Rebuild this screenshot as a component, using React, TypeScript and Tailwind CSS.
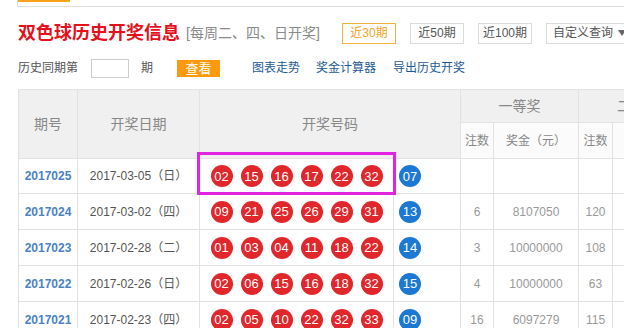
import React from "react";

interface Draw {
  issue: string;
  date: string;
  red: string[];
  blue: string;
  n1: string;
  p1: string;
  n2: string;
  p2: string;
}

const draws: Draw[] = [
  { issue: "2017025", date: "2017-03-05（日）", red: ["02", "15", "16", "17", "22", "32"], blue: "07", n1: "", p1: "", n2: "", p2: "" },
  { issue: "2017024", date: "2017-03-02（四）", red: ["09", "21", "25", "26", "29", "31"], blue: "13", n1: "6", p1: "8107050", n2: "120", p2: "159459" },
  { issue: "2017023", date: "2017-02-28（二）", red: ["01", "03", "04", "11", "18", "22"], blue: "14", n1: "3", p1: "10000000", n2: "108", p2: "190745" },
  { issue: "2017022", date: "2017-02-26（日）", red: ["02", "06", "15", "16", "18", "32"], blue: "15", n1: "4", p1: "10000000", n2: "63", p2: "316728" },
  { issue: "2017021", date: "2017-02-23（四）", red: ["02", "05", "10", "22", "32", "33"], blue: "09", n1: "16", p1: "6097279", n2: "115", p2: "201584" },
];

function Ball({ n, blue }: { n: string; blue?: boolean }) {
  return (
    <span
      className={`inline-flex h-[22px] w-[22px] items-center justify-center rounded-full text-[13px] leading-none text-white ${
        blue ? "bg-[#1b78d3]" : "bg-[#e0272b]"
      }`}
    >
      {n}
    </span>
  );
}

export default function App() {
  return (
    <div className="h-[328px] w-[624px] overflow-hidden bg-white font-['Liberation_Sans','Noto_Sans_CJK_SC',sans-serif]">
      {/* tab strip bottom edge */}
      <div className="ml-[17px] h-[7px] border-b border-l border-[#dddddd]">
        <div className="h-[2px] w-[52px] bg-[#f9a31b]" />
      </div>

      {/* title + range buttons */}
      <div className="mt-[15px] flex h-[22px] items-center">
        <div className="flex w-[342px] shrink-0 items-center pl-[18px]">
          <h1 className="text-[18px] font-bold leading-none text-[#e5101c]">双色球历史开奖信息</h1>
          <span className="ml-[6px] text-[14px] leading-none text-[#8a8a8a]">[每周二、四、日开奖]</span>
        </div>
        <div className="flex shrink-0 gap-[14px] text-[12px]">
          <button className="h-[21px] w-[54px] shrink-0 border border-[#f0b43c] text-[#f5a225]">近30期</button>
          <button className="h-[21px] w-[54px] shrink-0 border border-[#dcdcdc] text-[#555]">近50期</button>
          <button className="h-[21px] w-[54px] shrink-0 border border-[#dcdcdc] text-[#555]">近100期</button>
          <button className="flex h-[21px] w-[90px] shrink-0 items-center border border-[#dcdcdc] pl-[6px] text-[#555]">
            自定义查询
            <svg className="ml-[5px] shrink-0" width="8" height="6" viewBox="0 0 8 6">
              <path d="M0 0h8L4 6z" fill="#666" />
            </svg>
          </button>
        </div>
      </div>

      {/* history lookup + links */}
      <div className="mt-[14px] flex h-[20px] items-center pl-[18px] text-[12px] text-[#555]">
        <span>历史同期第</span>
        <input className="ml-[13px] h-[19px] w-[38px] border border-[#cccccc] outline-none" />
        <span className="ml-[12px]">期</span>
        <button className="ml-[24px] h-[17px] w-[43px] bg-[#fb9a0e] text-[13px] leading-none text-white">查看</button>
        <a className="ml-[32px] text-[#1d5a92]">图表走势</a>
        <a className="ml-[16px] text-[#1d5a92]">奖金计算器</a>
        <a className="ml-[17px] text-[#1d5a92]">导出历史开奖</a>
      </div>

      {/* results table */}
      <div className="relative ml-[18px] mt-[11px]">
        <table className="w-[679px] table-fixed border-collapse text-center">
          <colgroup>
            <col className="w-[59px]" />
            <col className="w-[122px]" />
            <col className="w-[194px]" />
            <col className="w-[67px]" />
            <col className="w-[33px]" />
            <col className="w-[85px]" />
            <col className="w-[34px]" />
            <col className="w-[85px]" />
          </colgroup>
          <thead className="text-[#888]">
            <tr className="h-[33px] bg-[#f0f0f0] text-[14px]">
              <th rowSpan={2} className="border border-[#e2e2e2] font-normal">期号</th>
              <th rowSpan={2} className="border border-[#e2e2e2] font-normal">开奖日期</th>
              <th rowSpan={2} colSpan={2} className="border border-[#e2e2e2] font-normal">开奖号码</th>
              <th colSpan={2} className="border border-[#e2e2e2] font-normal">一等奖</th>
              <th colSpan={2} className="border border-[#e2e2e2] font-normal">二等奖</th>
            </tr>
            <tr className="h-[36px] bg-[#fbfbfb] text-[12px]">
              <th className="border border-[#e2e2e2] font-normal">注数</th>
              <th className="border border-[#e2e2e2] font-normal">奖金（元）</th>
              <th className="border border-[#e2e2e2] font-normal">注数</th>
              <th className="border border-[#e2e2e2] font-normal">奖金（元）</th>
            </tr>
          </thead>
          <tbody className="text-[12px]">
            {draws.map((d, i) => (
              <tr key={d.issue} className={i === 0 ? "h-[35px]" : "h-[36px]"}>
                <td className="border border-[#e2e2e2] font-bold text-[#4a82c4]">{d.issue}</td>
                <td className="border border-[#e2e2e2] text-[#555]">{d.date}</td>
                <td className="border border-[#e2e2e2]">
                  <div className="flex justify-center gap-[8px]">
                    {d.red.map((n, k) => (
                      <Ball key={k} n={n} />
                    ))}
                  </div>
                </td>
                <td className="border border-[#e2e2e2] pl-[5px] text-left">
                  <Ball n={d.blue} blue />
                </td>
                <td className="border border-[#e2e2e2] text-[#999]">{d.n1}</td>
                <td className="border border-[#e2e2e2] text-[#999]">{d.p1}</td>
                <td className="border border-[#e2e2e2] text-[#999]">{d.n2}</td>
                <td className="border border-[#e2e2e2] text-[#999]">{d.p2}</td>
              </tr>
            ))}
          </tbody>
        </table>
        {/* highlight around latest red balls */}
        <div className="pointer-events-none absolute left-[179px] top-[63px] h-[43px] w-[199px] border-[3px] border-[#e024e0]" />
      </div>
    </div>
  );
}
